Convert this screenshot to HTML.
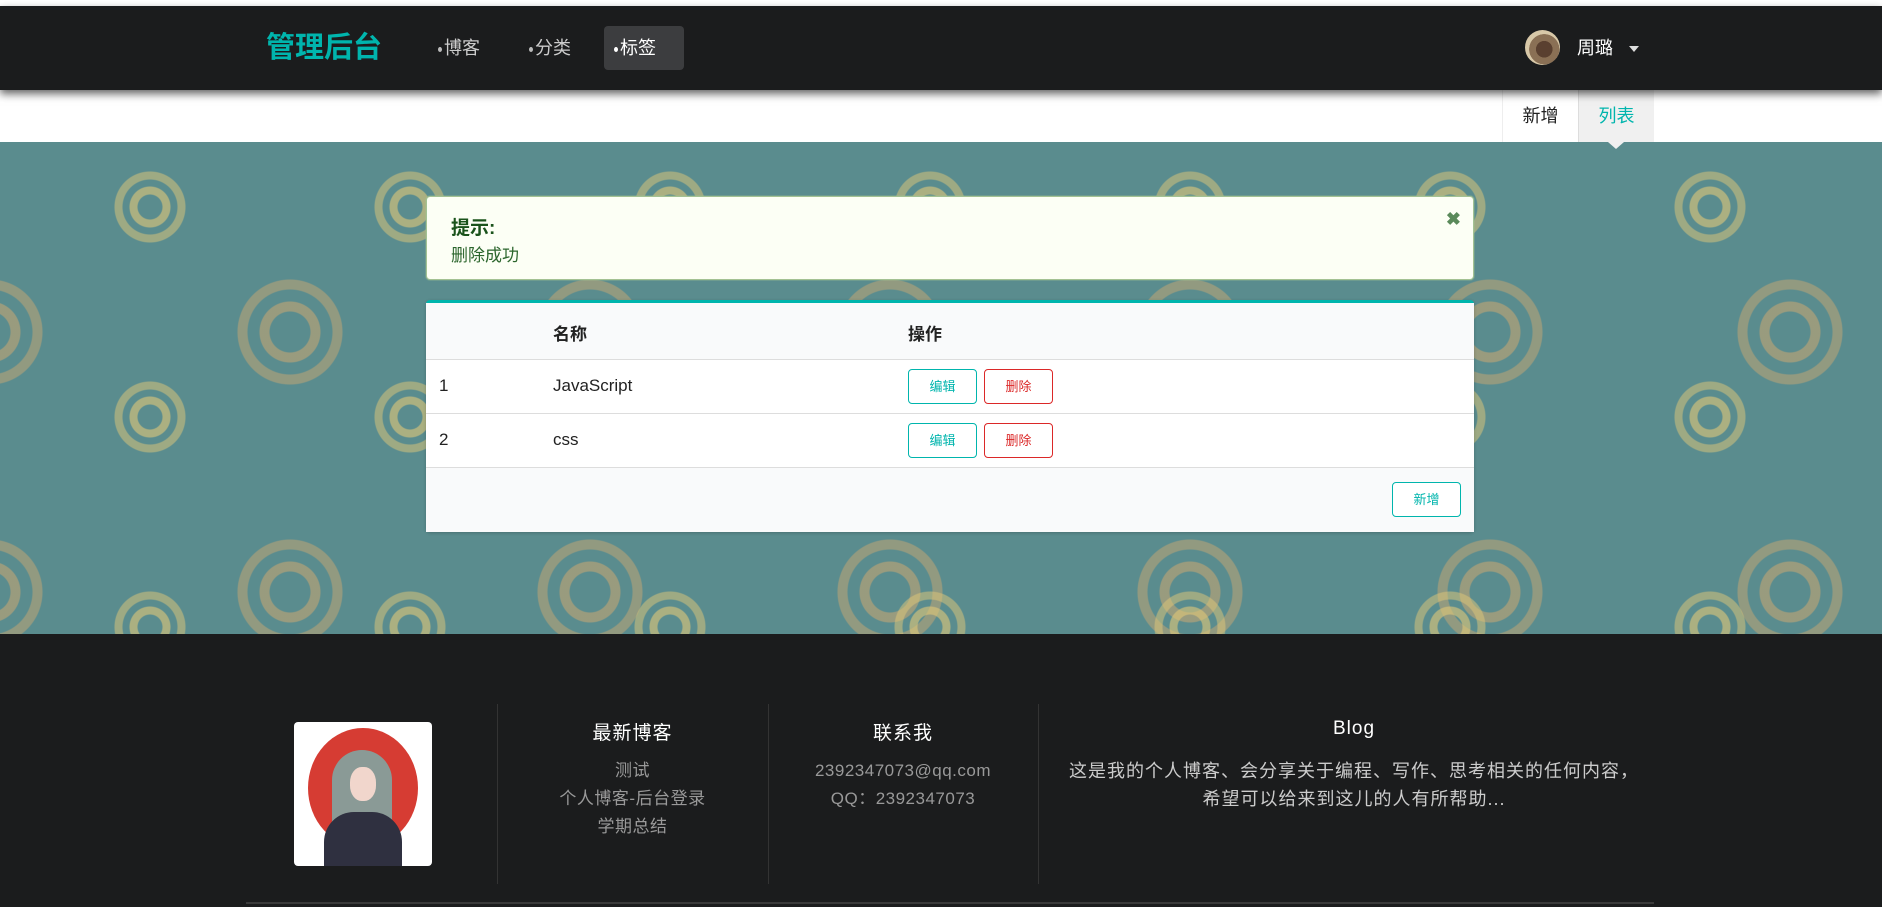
<!DOCTYPE html>
<html><head><meta charset="utf-8"><style>
*{box-sizing:border-box;margin:0;padding:0}
body{width:1882px;height:907px;overflow:hidden;background:#fff;font-family:"Liberation Sans","Noto Sans CJK SC",sans-serif;position:relative}
.abs{position:absolute}
.nav{left:0;top:6px;width:1882px;height:84px;background:#1b1c1d;box-shadow:0 4px 8px rgba(0,0,0,.6);z-index:2}
.logo{left:266px;top:26px;color:#00b5ad;font-size:29px;font-weight:bold;line-height:44px}
.item{top:26px;height:44px;line-height:44px;color:#ccc;font-size:18px;padding:0 10px}
.item i{display:inline-block;width:4px;height:5px;background:#bbb;border-radius:50%;margin-right:2px;vertical-align:middle}
.active{background:#3c3d3f;border-radius:4px;color:#fff}
.sub{left:0;top:90px;width:1882px;height:52px;background:#fff}
.tab{top:90px;height:52px;line-height:52px;width:76px;text-align:center;font-size:18px}
.bg{left:0;top:142px;width:1882px;height:492px;background-color:#5a8c8e;
background-image:radial-gradient(circle at 50% 50%,transparent 12px,rgba(225,200,120,.6) 13px,rgba(225,200,120,.6) 20px,transparent 21px,transparent 27px,rgba(225,200,120,.5) 28px,rgba(225,200,120,.5) 35px,transparent 36px),
radial-gradient(circle at 50% 50%,transparent 20px,rgba(215,170,110,.5) 21px,rgba(215,170,110,.5) 30px,transparent 31px,transparent 42px,rgba(215,170,110,.45) 43px,rgba(215,170,110,.45) 52px,transparent 53px);
background-size:260px 210px,300px 260px;background-position:20px -40px,140px 60px}
.alert{left:426px;top:196px;width:1048px;height:84px;background:#fcfff5;border:1px solid #a3c293;border-radius:4px;color:#2c662d;box-shadow:0 0 0 1px rgba(163,194,147,.3)}
.table{left:426px;top:300px;width:1048px;height:232px;background:#fff;border-top:3px solid #00b5ad;border-radius:4px;font-size:17px;color:#222;box-shadow:0 1px 3px rgba(0,0,0,.2)}
.row{position:absolute;left:0;width:1048px;border-bottom:1px solid #ddd}
.btn{position:absolute;width:69px;height:35px;border:1px solid #00b5ad;color:#00b5ad;border-radius:4px;text-align:center;line-height:33px;font-size:13px;background:#fff}
.red{border-color:#db2828;color:#db2828}
.foot{left:0;top:634px;width:1882px;height:273px;background:#1b1c1d}
.div{top:704px;width:1px;height:180px;background:#333}
.h{top:718px;color:#fff;font-size:19px;text-align:center;letter-spacing:1px}
.t{color:#999;font-size:17px;text-align:center;line-height:28px;letter-spacing:.5px}
</style></head><body>
<div class="abs nav"></div>
<div class="abs logo" style="z-index:3">管理后台</div>
<div class="abs item" style="left:428px;z-index:3"><i></i>博客</div>
<div class="abs item" style="left:519px;z-index:3"><i></i>分类</div>
<div class="abs item active" style="left:604px;width:80px;z-index:3"><i style="background:#fff"></i>标签</div>
<div class="abs" style="left:1525px;top:30px;width:35px;height:35px;border-radius:50%;background:radial-gradient(circle at 55% 55%,#5a4030 0 30%,#8a7055 31% 55%,#d8c8a8 56%);z-index:3"></div>
<div class="abs" style="left:1577px;top:34px;color:#fff;font-size:18px;z-index:3">周璐</div>
<div class="abs" style="left:1629px;top:46px;width:0;height:0;border-left:5px solid transparent;border-right:5px solid transparent;border-top:6px solid #ddd;z-index:3"></div>
<div class="abs sub"></div>
<div class="abs tab" style="left:1502px;border-left:1px solid #eee;color:#222">新增</div>
<div class="abs tab" style="left:1578px;background:#f0f0f0;color:#00b5ad;border-left:1px solid #ddd">列表</div>
<div class="abs bg"></div>
<div class="abs" style="left:1608px;top:142px;width:0;height:0;border-left:8px solid transparent;border-right:8px solid transparent;border-top:7px solid #f0f0f0"></div>
<div class="abs alert">
<div class="abs" style="left:24px;top:16px;font-size:19px;font-weight:bold;color:#1a531b">提示:</div>
<div class="abs" style="left:24px;top:44px;font-size:17px">删除成功</div>
<div class="abs" style="right:12px;top:12px;font-size:18px;font-weight:bold;color:#5a8a5a">✖</div>
</div>
<div class="abs table">
<div class="row" style="top:0;height:57px;background:#f9fafb;font-weight:bold"><span class="abs" style="left:127px;top:17px">名称</span><span class="abs" style="left:482px;top:17px">操作</span></div>
<div class="row" style="top:57px;height:54px"><span class="abs" style="left:13px;top:16px">1</span><span class="abs" style="left:127px;top:16px">JavaScript</span><div class="btn" style="left:482px;top:9px">编辑</div><div class="btn red" style="left:558px;top:9px">删除</div></div>
<div class="row" style="top:111px;height:54px"><span class="abs" style="left:13px;top:16px">2</span><span class="abs" style="left:127px;top:16px">css</span><div class="btn" style="left:482px;top:9px">编辑</div><div class="btn red" style="left:558px;top:9px">删除</div></div>
<div class="row" style="top:165px;height:64px;background:#f9fafb;border:none"><div class="btn" style="left:966px;top:14px">新增</div></div>
</div>
<div class="abs foot"></div>
<div class="abs" style="left:294px;top:722px;width:138px;height:144px;background:#fff;border-radius:4px;overflow:hidden">
<div class="abs" style="left:14px;top:6px;width:110px;height:120px;border-radius:50%;background:#d63c33"></div>
<div class="abs" style="left:38px;top:28px;width:60px;height:120px;border-radius:30px 30px 0 0;background:#8a9a96"></div>
<div class="abs" style="left:30px;top:90px;width:78px;height:60px;border-radius:30px 30px 0 0;background:#2f3040"></div>
<div class="abs" style="left:56px;top:45px;width:26px;height:34px;border-radius:45%;background:#f1d6cc"></div>
</div>
<div class="abs div" style="left:497px"></div>
<div class="abs div" style="left:768px"></div>
<div class="abs div" style="left:1038px"></div>
<div class="abs h" style="left:497px;width:271px">最新博客</div>
<div class="abs h" style="left:768px;width:270px">联系我</div>
<div class="abs h" style="left:1038px;width:632px">Blog</div>
<div class="abs t" style="left:497px;width:271px;top:757px">测试<br>个人博客-后台登录<br>学期总结</div>
<div class="abs t" style="left:768px;width:270px;top:757px">2392347073@qq.com<br>QQ：2392347073</div>
<div class="abs t" style="left:1038px;width:632px;top:757px;color:#ccc;font-size:18px;letter-spacing:1px">这是我的个人博客、会分享关于编程、写作、思考相关的任何内容，<br>希望可以给来到这儿的人有所帮助...</div>
<div class="abs" style="left:246px;top:902px;width:1408px;height:2px;background:#3a3a3a"></div>
</body></html>
